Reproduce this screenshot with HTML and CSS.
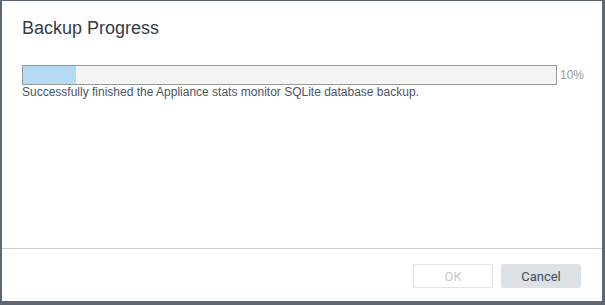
FILE: index.html
```html
<!DOCTYPE html>
<html>
<head>
<meta charset="utf-8">
<link rel="stylesheet" href="styles.css">
</head>
<body>
<div class="dialog">
  <div class="body">
    <h1 class="title">Backup Progress</h1>
    <div class="progress-row">
      <div class="bar"><div class="fill" style="width:10%"></div></div>
      <span class="pct">10%</span>
    </div>
    <div class="msg">Successfully finished the Appliance stats monitor SQLite database backup.</div>
  </div>
  <div class="footer">
    <button class="btn ok" disabled>OK</button>
    <button class="btn cancel">Cancel</button>
  </div>
</div>
</body>
</html>
```
FILE: styles.css
```css
html, body { margin: 0; padding: 0; }
body {
  width: 605px; height: 305px;
  background: #5d6874;
  font-family: "Liberation Sans", Arial, sans-serif;
  box-sizing: border-box;
  padding: 1px 3px 4px 2px;
}
.dialog {
  background: #fff;
  height: 100%;
  display: flex;
  flex-direction: column;
}
.body { flex: 1; padding: 16px 10px 0 20px; }
.title {
  margin: 0;
  font-size: 18px;
  font-weight: normal;
  color: #333c48;
  line-height: 22px;
}
.progress-row {
  display: flex;
  align-items: center;
  margin-top: 26px;
}
.bar {
  flex: none;
  width: 533px; height: 18px;
  border: 1px solid #999;
  background: #f4f4f4;
}
.fill { height: 100%; background: #b5daf4; }
.pct { font-size: 12px; color: #9a9a9a; margin-left: 3px; }
.msg {
  font-size: 12px; color: #4d5562;
  line-height: 14px;
}
.footer {
  border-top: 1px solid #d0d0d0;
  height: 53px;
  box-sizing: border-box;
  display: flex;
  justify-content: flex-end;
  align-items: flex-start;
  gap: 8px;
  padding: 15px 21px 0 0;
}
.btn {
  width: 80px; height: 24px;
  font-family: "Roboto", "Liberation Sans", sans-serif;
  font-size: 13px;
  border-radius: 2px;
  padding: 0;
}
.ok { background: #fff; border: 1px solid #e3e3e3; color: #c8c8c8; }
.cancel { background: #dde1e6; border: 1px solid #dde1e6; color: #434e5b; }
```
